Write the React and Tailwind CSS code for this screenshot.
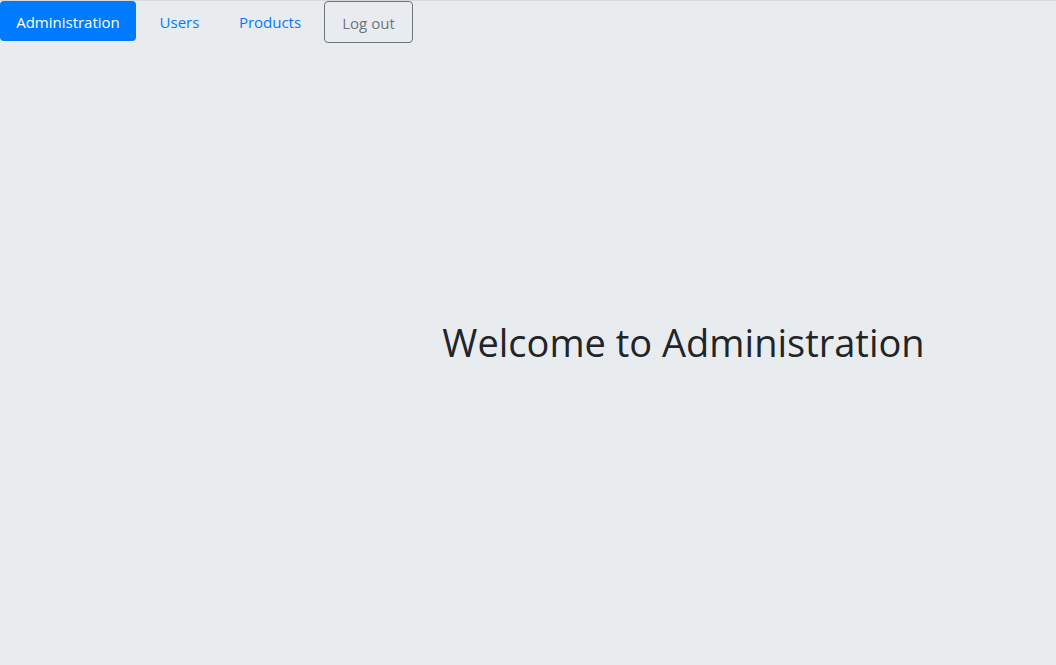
export default function App() {
  return (
    <div
      className="w-[1056px] h-[665px] bg-[#e9ecef] border-t border-[#d6d8db] flex flex-col overflow-hidden"
      style={{ fontFamily: '"Open Sans", "Noto Sans", sans-serif' }}
    >
      <nav className="flex items-start h-[42px]">
        <a className="w-[136px] h-[40px] flex items-center justify-center bg-[#007bff] text-white rounded-[4px] text-[15px] pt-[2px]">
          Administration
        </a>
        <a className="w-[87px] h-[40px] flex items-center justify-center text-[#007bff] text-[15px] pt-[2px]">
          Users
        </a>
        <a className="w-[94px] h-[40px] flex items-center justify-center text-[#007bff] text-[15px] pt-[2px]">
          Products
        </a>
        <button className="ml-[7px] w-[89px] h-[42px] flex items-center justify-center border border-[#6c757d] text-[#6c757d] rounded-[4px] text-[15px] pt-[2px]">
          Log out
        </button>
      </nav>
      <main className="flex-1 flex items-center justify-center pl-[311px] pb-[23px]">
        <h1 className="text-[38px] leading-[1.2] text-[#212529] font-normal">
          Welcome to Administration
        </h1>
      </main>
    </div>
  );
}
